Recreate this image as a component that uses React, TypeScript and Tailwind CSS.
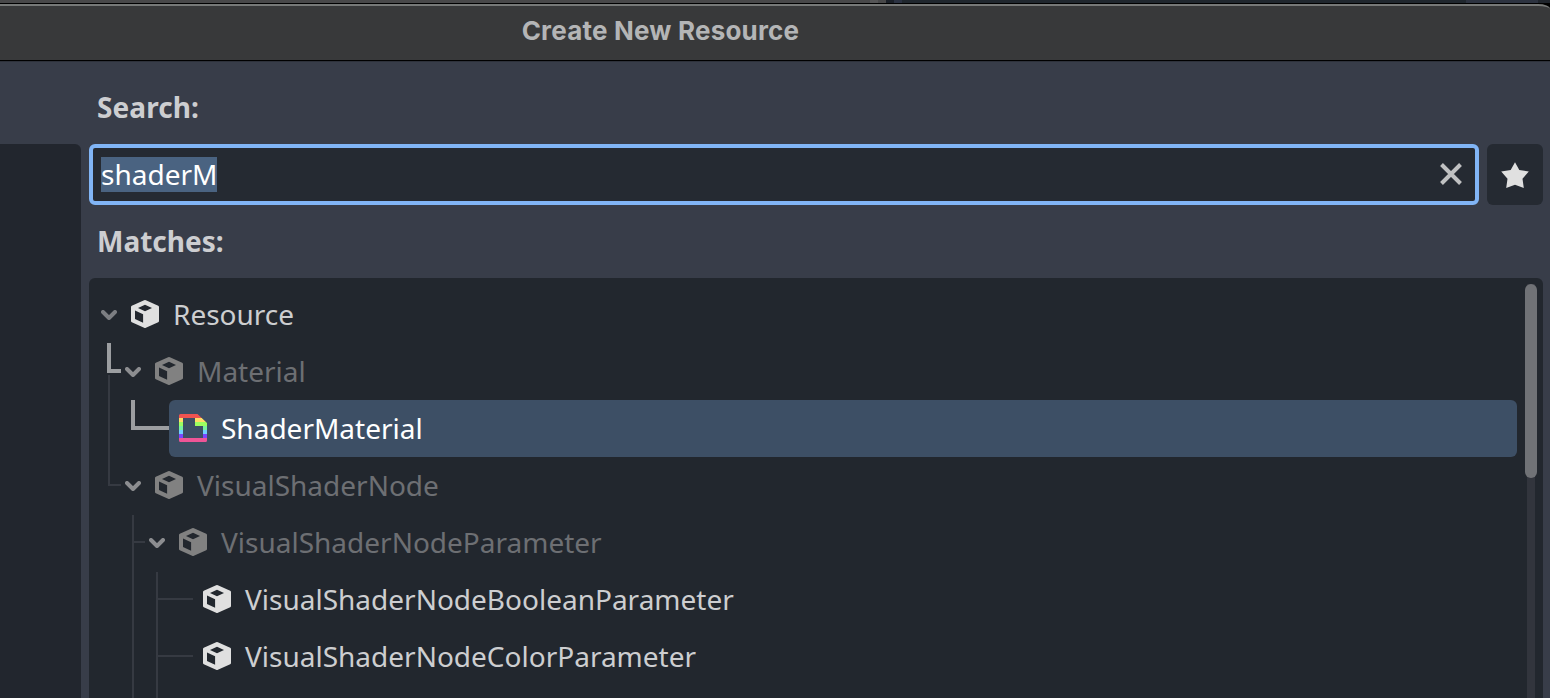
import React from "react";

type Guide = { x: number; y: number; w: number; h: number; strong?: boolean };

type Row = {
  label: string;
  gutter: string;
  guides: Guide[];
  open?: boolean;
  kind: "normal" | "dim" | "selected";
};

const rows: Row[] = [
  { label: "Resource", gutter: "w-3", guides: [], open: true, kind: "normal" },
  {
    label: "Material", gutter: "w-9", open: true, kind: "dim",
    guides: [
      { x: 18, y: 0, w: 4, h: 30, strong: true },
      { x: 18, y: 26, w: 14, h: 4, strong: true },
      { x: 19, y: 32, w: 2, h: 25 },
    ],
  },
  {
    label: "ShaderMaterial", gutter: "w-20", kind: "selected",
    guides: [
      { x: 19, y: 0, w: 2, h: 57 },
      { x: 42, y: 0, w: 4, h: 30, strong: true },
      { x: 42, y: 26, w: 38, h: 4, strong: true },
    ],
  },
  {
    label: "VisualShaderNode", gutter: "w-9", open: true, kind: "dim",
    guides: [
      { x: 19, y: 0, w: 2, h: 29 },
      { x: 19, y: 27, w: 13, h: 2 },
    ],
  },
  {
    label: "VisualShaderNodeParameter", gutter: "w-[60px]", open: true, kind: "dim",
    guides: [
      { x: 43, y: 1, w: 2, h: 56 },
      { x: 43, y: 27, w: 13, h: 2 },
    ],
  },
  {
    label: "VisualShaderNodeBooleanParameter", gutter: "w-[114px]", kind: "normal",
    guides: [
      { x: 43, y: 0, w: 2, h: 57 },
      { x: 67, y: 1, w: 2, h: 56 },
      { x: 67, y: 27, w: 37, h: 2 },
    ],
  },
  {
    label: "VisualShaderNodeColorParameter", gutter: "w-[114px]", kind: "normal",
    guides: [
      { x: 43, y: 0, w: 2, h: 57 },
      { x: 67, y: 0, w: 2, h: 57 },
      { x: 67, y: 27, w: 37, h: 2 },
    ],
  },
  {
    label: "", gutter: "w-[114px]", kind: "normal",
    guides: [
      { x: 43, y: 0, w: 2, h: 57 },
      { x: 67, y: 0, w: 2, h: 57 },
    ],
  },
];

function Guides({ guides }: { guides: Guide[] }) {
  return (
    <svg width="113" height="57" className="pointer-events-none absolute left-0 top-0" shapeRendering="crispEdges">
      {guides.map((g, i) => (
        <rect key={i} x={g.x} y={g.y} width={g.w} height={g.h} fill={g.strong ? "#9c9ea1" : "#363a42"} />
      ))}
    </svg>
  );
}

function Chevron({ dim }: { dim: boolean }) {
  return (
    <svg width="16" height="10" viewBox="0 0 16 10" className="mt-px shrink-0" fill="none">
      <path d="M2 2l6 6 6-6" stroke={dim ? "#8c8d90" : "#7c7e82"} strokeWidth="4" strokeLinecap="round" strokeLinejoin="round" />
    </svg>
  );
}

function Cube({ dim }: { dim: boolean }) {
  return (
    <svg width="28" height="28" viewBox="0 0 28 28" className="-mt-px shrink-0">
      <path
        fillRule="evenodd"
        fill={dim ? "#818181" : "#e0e0e0"}
        d="M13.100 .2Q14 -.2 14.900 .2L27.200 5.800Q28 6.200 28 7V21Q28 21.800 27.200 22.200L14.900 27.800Q14 28.200 13.100 27.800L.8 22.200Q0 21.800 0 21V7Q0 6.200.8 5.800ZM14 4.700L7 8 14 11.300 21 8ZM4 10.500V19L12.100 22.800V14.300Z"
      />
    </svg>
  );
}

function ShaderFile() {
  return (
    <svg width="28" height="28" viewBox="0 0 28 28" className="-mt-px shrink-0">
      <defs>
        <clipPath id="sheet">
          <path clipRule="evenodd" d="M1.500 0H18.500L28 9V26.500Q28 28 26.500 28H1.500Q0 28 0 26.500V1.500Q0 0 1.500 0ZM4 4V24H24V12H16V4Z" />
        </clipPath>
      </defs>
      <g clipPath="url(#sheet)" shapeRendering="crispEdges">
        <rect width="28" height="4" fill="#ef5350" />
        <rect y="4" width="28" height="4" fill="#ffdd65" />
        <rect y="8" width="28" height="4" fill="#9dff5f" />
        <rect y="12" width="28" height="4" fill="#78f39f" />
        <rect y="16" width="28" height="4" fill="#70cfff" />
        <rect y="20" width="28" height="4" fill="#7a45ff" />
        <rect y="24" width="28" height="4" fill="#ef5597" />
      </g>
    </svg>
  );
}

function TreeRow({ row }: { row: Row }) {
  const selected = row.kind === "selected";
  const dim = row.kind === "dim";
  const color = selected ? "text-white" : dim ? "text-[#6d6f73]" : "text-[#cdced0]";
  return (
    <div className="relative flex h-[57px] shrink-0 items-center">
      <Guides guides={row.guides} />
      <div className={row.gutter + " shrink-0"} />
      <div className={"flex h-full min-w-0 grow items-center rounded-md " + (selected ? "bg-[#3d4f65] pl-[10px]" : "")}>
        {row.open && (
          <div className="mr-[14px] flex">
            <Chevron dim={dim} />
          </div>
        )}
        {row.label && (selected ? <ShaderFile /> : <Cube dim={dim} />)}
        <span className={"-mt-px ml-[14px] whitespace-nowrap text-[28px] leading-[38px] " + color}>{row.label}</span>
      </div>
    </div>
  );
}

export default function App() {
  return (
    <div className="flex h-[698px] w-[1550px] flex-col overflow-hidden bg-[#383d49] font-['Noto_Sans',sans-serif]">
      <div className="flex h-[3px] shrink-0 bg-[#20252c]">
        <div className="w-[870px] bg-[#484849]" />
        <div className="w-2 bg-[#555556]" />
        <div className="w-2 bg-[#484849]" />
        <div className="w-2 bg-[#1b2028]" />
        <div className="w-2 bg-[#2b3242]" />
        <div className="w-[564px] bg-[#20272e]" />
        <div className="w-[72px] bg-[#2d3340]" />
      </div>
      <div className="h-[57px] shrink-0 bg-black pt-px">
        <header className="flex h-full justify-center rounded-tr-[12px_5px] border-t-2 border-[#777978] bg-[#38393a] pr-[229px]">
          <h1 className="mt-[9px] whitespace-nowrap font-['Inter',sans-serif] text-[26px] font-bold leading-[32px] tracking-[0.2px] text-[#b4b5b6]">
            Create New Resource
          </h1>
        </header>
      </div>
      <div className="h-px shrink-0 bg-black" />
      <div className="h-px shrink-0 bg-[#2e323b]" />
      <div className="flex min-h-0 grow gap-2 pr-[7px]">
        <aside className="mt-[82px] w-[81px] shrink-0 rounded-tr-md bg-[#22262e]" />
        <main className="flex min-w-0 grow flex-col">
          <div className="flex h-[82px] shrink-0 items-center pl-2 pt-[7px] text-[28px] font-bold leading-[38px] tracking-[0.1px] text-[#cdced1]">
            Search:
          </div>
          <div className="flex h-[61px] shrink-0 gap-2">
            <div className="flex min-w-0 grow items-center justify-between rounded-md border-4 border-[#81b5f6] bg-[#252a32] pl-2 pr-[13px]">
              <span className="mt-[-1px] flex h-[35px] items-center bg-[#4a6381] text-[28px] leading-[35px] text-white">
                <span>shaderM</span>
              </span>
              <svg width="22" height="22" viewBox="0 0 22 22" className="-mt-px" fill="none">
                <path d="M1.500 1.500l19 19M20.500 1.500l-19 19" stroke="#c0c1c2" strokeWidth="4" />
              </svg>
            </div>
            <button className="flex w-14 items-center justify-center rounded-md bg-[#252a32]">
              <svg width="28" height="28" viewBox="0 0 28 28">
                <path d="M14 1.200l4.300 7.800 9.500 1.500-6.300 7.200 1.300 9.300L14 23.800l-8.800 3.200 1.300-9.300L.2 10.500 9.700 9z" fill="#e0e0e0" />
              </svg>
            </button>
          </div>
          <div className="flex h-[73px] shrink-0 items-center pb-[2px] pl-2 text-[28px] font-bold leading-[38px] text-[#cdced1]">
            Matches:
          </div>
          <section className="flex min-h-0 grow overflow-hidden rounded-t-md bg-[#22272e]">
            <div className="flex min-w-0 grow flex-col pt-2">
              {rows.map((row, i) => (
                <TreeRow key={i} row={row} />
              ))}
            </div>
            <div className="ml-2 mr-[6px] mt-[6px] flex w-3 shrink-0 justify-center bg-[linear-gradient(#32353d,#32353d)] bg-[length:8px_100%] bg-center bg-no-repeat">
              <div className="h-[194px] w-3 rounded-full bg-[#707276]" />
            </div>
          </section>
        </main>
      </div>
    </div>
  );
}
